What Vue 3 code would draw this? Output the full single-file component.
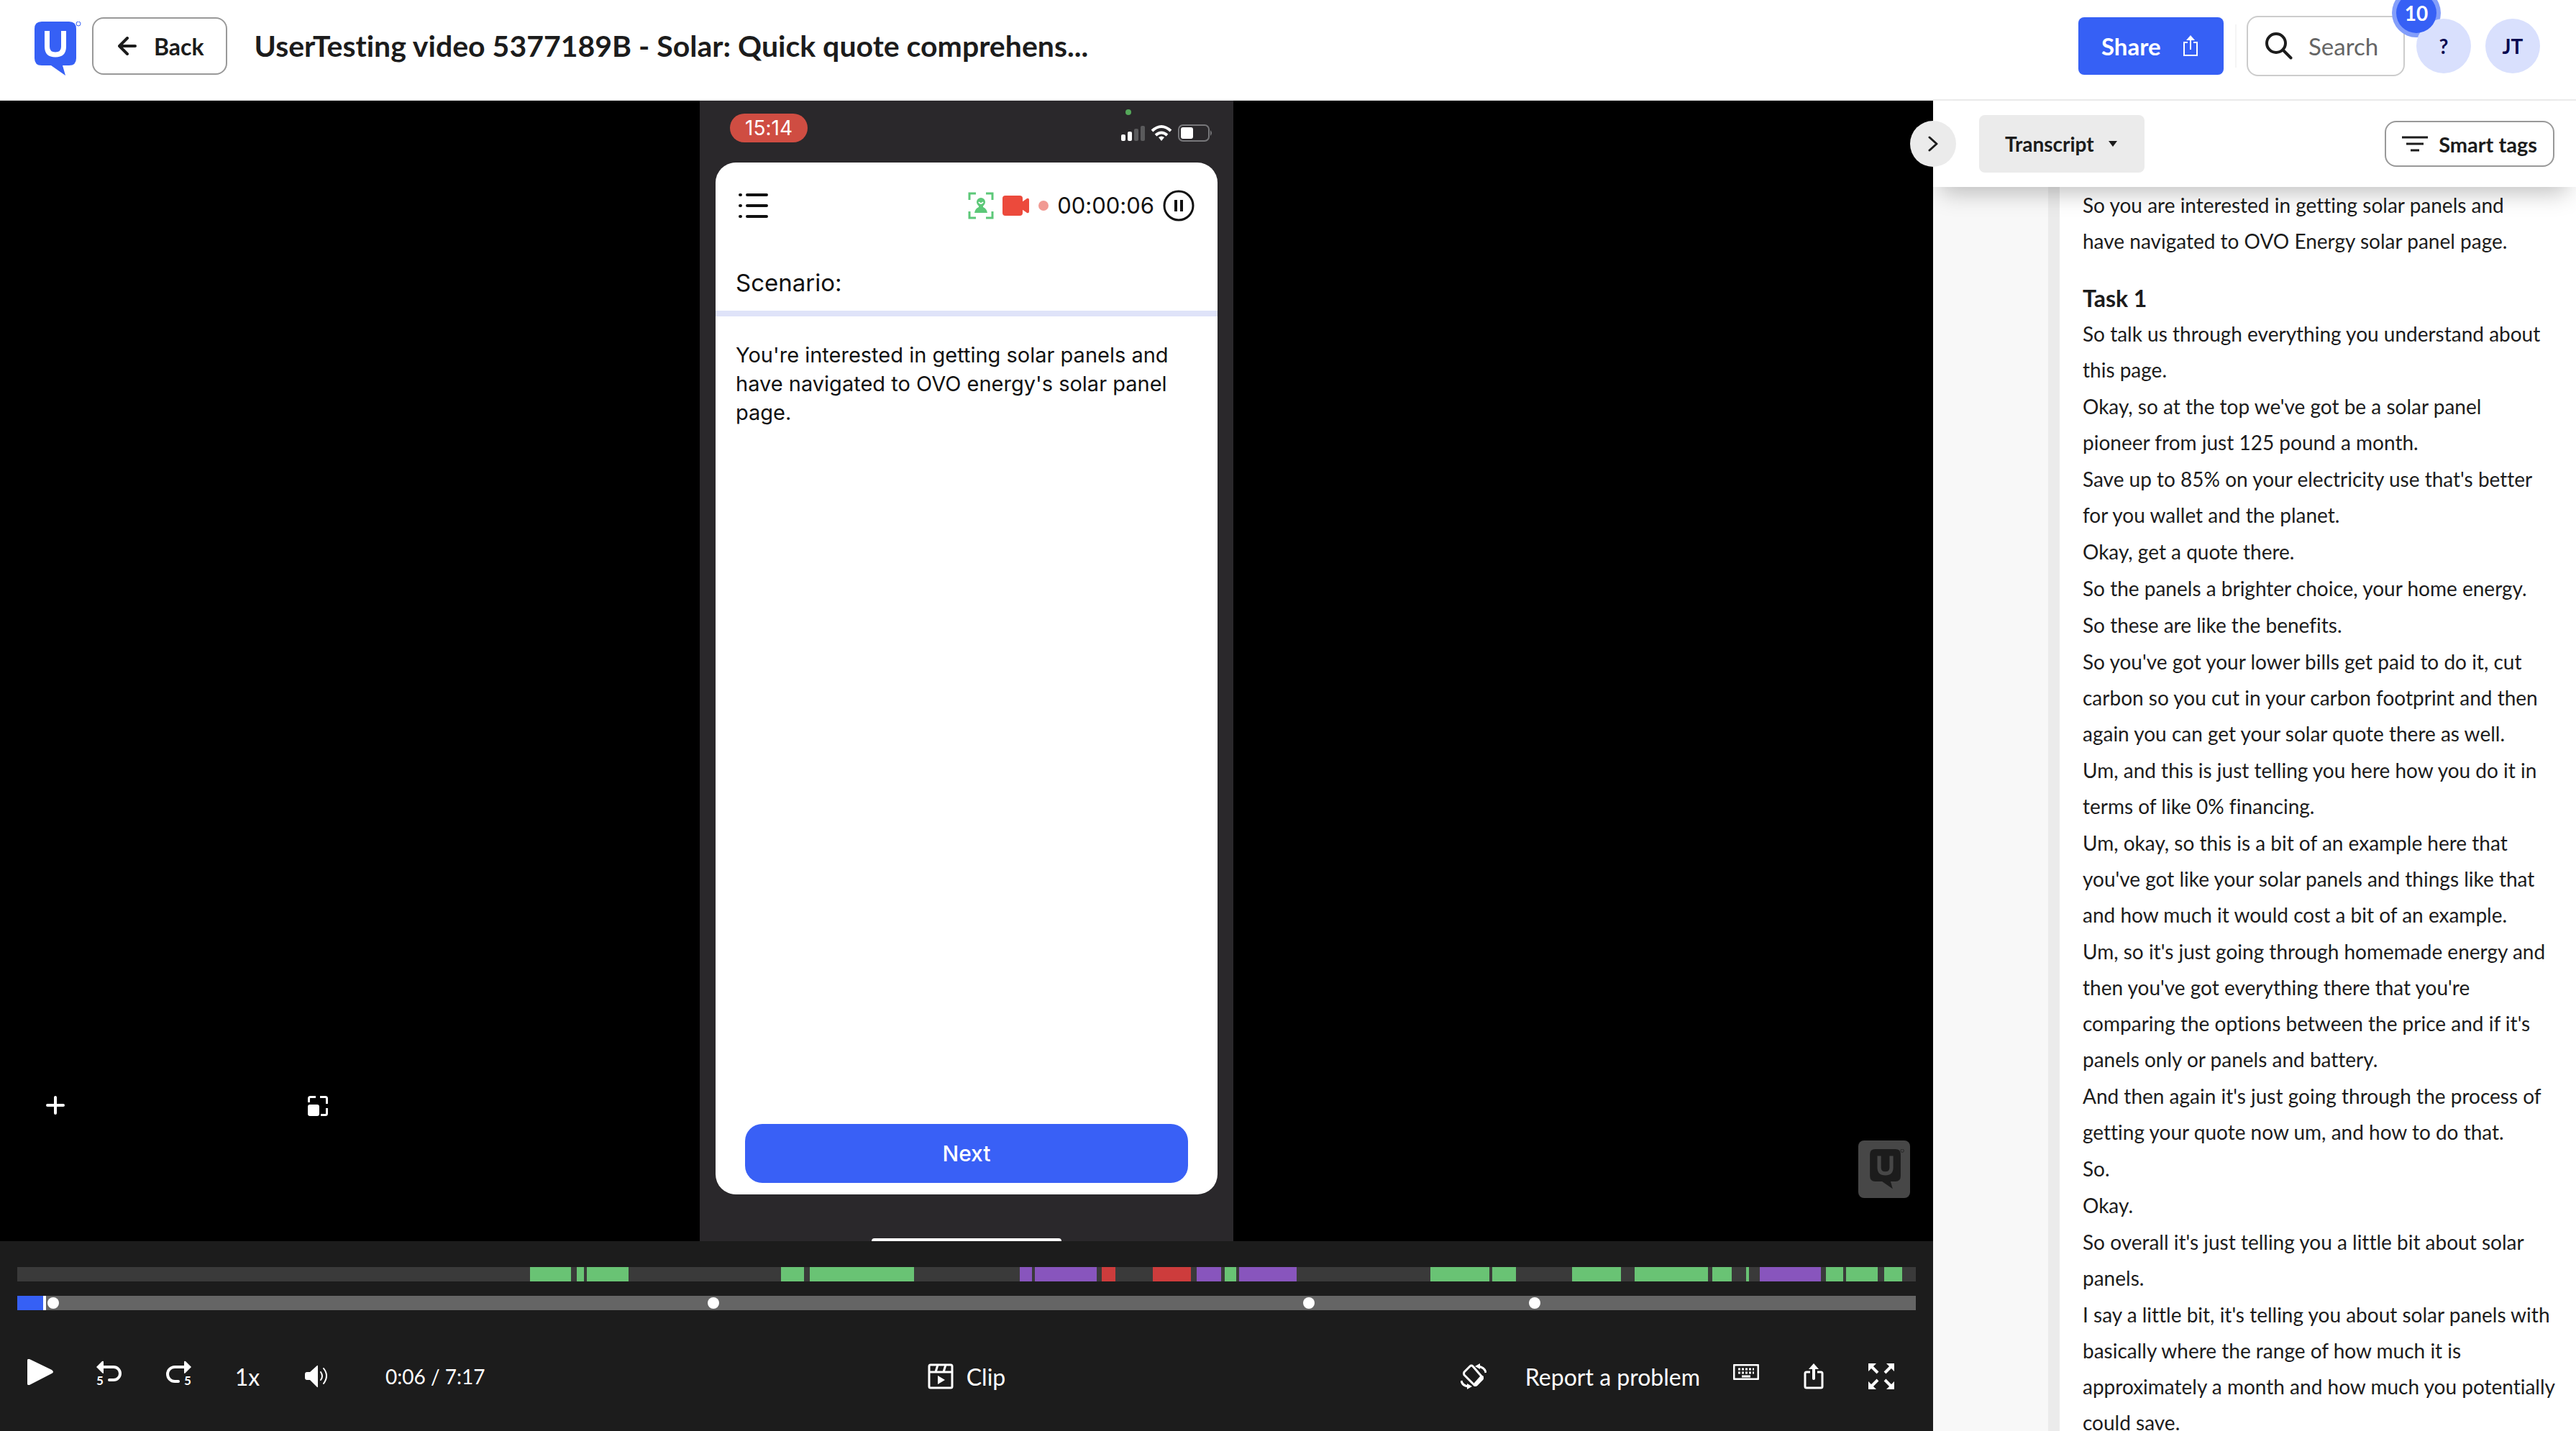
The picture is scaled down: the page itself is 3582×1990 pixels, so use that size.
<script setup>
import { ref, computed } from 'vue';

const duration = 437;
const current = ref(6);
const search = ref('');
const view = ref('Transcript');

const progressStyle = computed(() => {
  const pct = (current.value / duration) * 100;
  return { background: `linear-gradient(to right, #3660f5 ${pct}%, #656565 ${pct}%)` };
});

// sentiment ranges, in units of the 2640-wide timeline: [start, end, kind]
const ranges = [
  [713, 770, 'green'],
  [778, 788, 'green'],
  [792, 850, 'green'],
  [1062, 1094, 'green'],
  [1102, 1247, 'green'],
  [1394, 1411, 'purple'],
  [1415, 1501, 'purple'],
  [1508, 1527, 'red'],
  [1579, 1632, 'red'],
  [1640, 1674, 'purple'],
  [1679, 1695, 'green'],
  [1699, 1779, 'purple'],
  [1965, 2047, 'green'],
  [2051, 2084, 'green'],
  [2162, 2230, 'green'],
  [2249, 2351, 'green'],
  [2357, 2384, 'green'],
  [2404, 2408, 'green'],
  [2423, 2508, 'purple'],
  [2515, 2539, 'green'],
  [2543, 2587, 'green'],
  [2596, 2621, 'green']
];

const segments = ranges.map(([start, end, kind], i) => {
  const prev = i ? ranges[i - 1][1] : 0;
  return {
    kind,
    style: {
      marginLeft: ((start - prev) / 2640) * 100 + '%',
      width: ((end - start) / 2640) * 100 + '%'
    }
  };
});

const markers = [50, 968, 1796, 2110].map((x) => ({ left: (x / 2640) * 100 + '%' }));

const intro = ['So you are interested in getting solar panels and\nhave navigated to OVO Energy solar panel page.'];

const sentences = [
  'So talk us through everything you understand about\nthis page.',
  "Okay, so at the top we've got be a solar panel\npioneer from just 125 pound a month.",
  "Save up to 85% on your electricity use that's better\nfor you wallet and the planet.",
  'Okay, get a quote there.',
  'So the panels a brighter choice, your home energy.',
  'So these are like the benefits.',
  "So you've got your lower bills get paid to do it, cut\ncarbon so you cut in your carbon footprint and then\nagain you can get your solar quote there as well.",
  'Um, and this is just telling you here how you do it in\nterms of like 0% financing.',
  "Um, okay, so this is a bit of an example here that\nyou've got like your solar panels and things like that\nand how much it would cost a bit of an example.",
  "Um, so it's just going through homemade energy and\nthen you've got everything there that you're\ncomparing the options between the price and if it's\npanels only or panels and battery.",
  "And then again it's just going through the process of\ngetting your quote now um, and how to do that.",
  'So.',
  'Okay.',
  "So overall it's just telling you a little bit about solar\npanels.",
  "I say a little bit, it's telling you about solar panels with\nbasically where the range of how much it is\napproximately a month and how much you potentially\ncould save."
];
</script>

<template>
  <div class="page">
    <header class="header">
      <a href="#" class="logo" aria-label="UserTesting">
        <svg width="66" height="76" viewBox="0 0 66 76">
          <path fill="#3660f5" d="M10 0h38q10 0 10 10v41q0 10-10 10h-9l4 14-20-14H10Q0 61 0 51V10Q0 0 10 0z" />
          <path fill="none" stroke="#fff" stroke-width="7" d="M17.500 13v22q0 11 11.500 11t11.500-11V13" />
          <circle cx="61" cy="3" r="3" fill="none" stroke="#3660f5" />
        </svg>
      </a>
      <button class="back">
        <svg width="26" height="26" viewBox="0 0 26 26" fill="none" stroke="#1c1c1c" stroke-width="4" stroke-linecap="round" stroke-linejoin="round">
          <path d="M24 13H3M13 2 2 13l11 11" />
        </svg>
        Back
      </button>
      <h1 class="title">UserTesting video 5377189B - Solar: Quick quote comprehens...</h1>
      <button class="share">
        Share
        <svg width="22" height="30" viewBox="0 0 22 30" fill="none" stroke="#fff" stroke-width="2">
          <path d="M7 10H2v18h18V10h-5M11 20V4" />
          <path d="M11 0l6 7H5z" fill="#fff" stroke="none" />
        </svg>
      </button>
      <span class="divider"></span>
      <label class="search">
        <svg width="38" height="38" viewBox="0 0 38 38" fill="none" stroke="#1c1c1c" stroke-width="4" stroke-linecap="round">
          <circle cx="15" cy="15" r="13" />
          <path d="m24.500 24.500 11 11" />
        </svg>
        <input v-model="search" type="text" placeholder="Search" aria-label="Search" />
      </label>
      <div class="help">
        <span class="ring"></span>
        <button class="avatar">?</button>
        <span class="badge">10</span>
      </div>
      <button class="avatar">JT</button>
    </header>

    <div class="body">
      <main class="player">
        <div class="stage">
          <div class="phone">
            <div class="status">
              <span class="clock">15:14</span>
              <span class="live"></span>
              <svg width="128" height="26" viewBox="0 0 128 26">
                <g fill="#fff">
                  <rect x="0" y="15" width="6" height="9" rx="2" />
                  <rect x="9" y="11" width="6" height="13" rx="2" />
                </g>
                <g fill="#5a5a5c">
                  <rect x="18" y="7" width="6" height="17" rx="2" />
                  <rect x="27" y="3" width="6" height="21" rx="2" />
                </g>
                <g fill="none" stroke="#fff" stroke-width="4">
                  <path d="M43 10q13-12 26 0" />
                  <path d="M48 16q8-7 16 0" />
                </g>
                <path fill="#fff" d="M56 24l-4-5q4-3 8 0z" />
                <rect x="80" y="2" width="42" height="22" rx="6" fill="none" stroke="#77777a" stroke-width="2" />
                <rect x="83" y="5" width="17" height="16" rx="3" fill="#fff" />
                <path fill="#77777a" d="M124 9q4 4 0 8z" />
              </svg>
            </div>
            <div class="card">
              <div class="card-bar">
                <svg width="42" height="36" viewBox="0 0 42 36" stroke="#111" stroke-width="4" stroke-linecap="round">
                  <path d="M2 3h1M2 18h1M2 33h1M12 3h27M12 18h27M12 33h27" />
                </svg>
                <span class="spacer"></span>
                <svg width="36" height="38" viewBox="0 0 36 38">
                  <path fill="none" stroke="#5cc878" stroke-width="3" d="M2 11V2h9M25 2h9v9M34 27v9h-9M11 36H2v-9" />
                  <circle cx="18" cy="14" r="6" fill="#5cc878" />
                  <path fill="#5cc878" d="M15 17h6v4q5 2 6 8H9q1-6 6-8z" />
                  <path fill="none" stroke="#fff" stroke-width="2" d="M15 14q3 4 6 0" />
                </svg>
                <svg class="cam" width="38" height="28" viewBox="0 0 38 28" fill="#ec4a3c">
                  <rect width="28" height="28" rx="4" />
                  <path d="M27 9l7-5q3-1 3 2v16q0 3-3 2l-7-5z" />
                </svg>
                <span class="rec"></span>
                <span class="timer">00:00:06</span>
                <svg width="44" height="44" viewBox="0 0 44 44" fill="none" stroke="#111">
                  <circle cx="22" cy="22" r="20" stroke-width="3" />
                  <path stroke-width="4" d="M18 14v16M26 14v16" />
                </svg>
              </div>
              <h2 class="scenario">Scenario:</h2>
              <p class="task">You're interested in getting solar panels and<br />have navigated to OVO energy's solar panel<br />page.</p>
              <button class="next">Next</button>
            </div>
            <span class="home"></span>
          </div>

          <button class="overlay plus" aria-label="Zoom in">
            <svg width="28" height="28" viewBox="0 0 28 28" stroke="#fff" stroke-width="4" stroke-linecap="round">
              <path d="M14 3v22M3 14h22" />
            </svg>
          </button>
          <button class="overlay pip" aria-label="Resize">
            <svg width="28" height="28" viewBox="0 0 28 28">
              <path fill="none" stroke="#fff" stroke-width="3" d="M1.500 9V3.500q0-2 2-2H11M17 1.500h7.500q2 0 2 2V11M26.500 17v7.500q0 2-2 2H18" />
              <rect y="12" width="16" height="16" rx="3" fill="#fff" />
            </svg>
          </button>
          <div class="overlay watermark">
            <svg width="49" height="56" viewBox="0 0 66 76">
              <path fill="#1c1c1c" d="M10 0h38q10 0 10 10v41q0 10-10 10h-9l4 14-20-14H10Q0 61 0 51V10Q0 0 10 0z" />
              <path fill="none" stroke="#474747" stroke-width="7" d="M17.500 13v22q0 11 11.500 11t11.500-11V13" />
              <circle cx="61" cy="3" r="3" fill="none" stroke="#1c1c1c" />
            </svg>
          </div>
        </div>

        <div class="controls">
          <div class="sentiment">
            <span v-for="(seg, i) in segments" :key="i" :class="seg.kind" :style="seg.style"></span>
          </div>
          <div class="progress">
            <input v-model.number="current" type="range" min="0" :max="duration" aria-label="Seek" :style="progressStyle" />
            <span v-for="(marker, i) in markers" :key="i" class="marker" :style="marker"></span>
          </div>
          <div class="buttons">
            <div class="group left">
              <button class="raised" aria-label="Play">
                <svg width="36" height="36" viewBox="0 0 36 36" fill="#fff">
                  <path d="M0 2q0-3 3-2l31 15q4 3 0 5L3 36q-3 1-3-2z" />
                </svg>
              </button>
              <button class="raised" aria-label="Back 5 seconds">
                <svg class="skip" width="36" height="36" viewBox="0 0 36 36">
                  <path fill="#fff" d="M0 11 8 3q2-1 2 1v15q0 2-2 0z" />
                  <path fill="none" stroke="#fff" stroke-width="4" d="M9 11h15a9 9 0 0 1 9 9a9 9 0 0 1-9 9h-6" />
                  <circle cx="18" cy="29" r="2" fill="#fff" />
                  <text x="0" y="36" font-size="17" font-weight="700" fill="#fff">5</text>
                </svg>
              </button>
              <button class="raised" aria-label="Forward 5 seconds">
                <svg class="skip" width="36" height="36" viewBox="0 0 36 36">
                  <path fill="#fff" d="M36 11 28 3q-2-1-2 1v15q0 2 2 0z" />
                  <path fill="none" stroke="#fff" stroke-width="4" d="M27 11H13a10 10 0 0 0-10 10a10 10 0 0 0 10 10h5" />
                  <circle cx="18" cy="31" r="2" fill="#fff" />
                  <text x="26" y="36" font-size="17" font-weight="700" fill="#fff">5</text>
                </svg>
              </button>
              <button class="speed">1x</button>
              <button aria-label="Volume">
                <svg width="36" height="32" viewBox="0 0 36 32">
                  <path fill="#fff" d="M2 13q0-3 3-3h4l10-9q1-1 1 1v28q0 2-1 1L9 21H5q-3 0-3-3z" />
                  <path fill="none" stroke="#fff" stroke-width="2" stroke-linecap="round" d="M24 10q4 6 0 11M28 5q8 10 0 21" />
                </svg>
              </button>
              <span class="time">0:06 / 7:17</span>
            </div>
            <button class="clip">
              <svg width="36" height="36" viewBox="0 0 36 36" fill="none" stroke="#fff" stroke-width="3">
                <rect x="2" y="2" width="32" height="32" rx="2" />
                <path d="M2 12h32M14 2l-3 10M25 2l-3 10" />
                <path fill="#fff" stroke="none" d="M14 17l10 6-10 6z" />
              </svg>
              Clip
            </button>
            <div class="group right">
              <button aria-label="Rotate">
                <svg width="36" height="36" viewBox="0 0 36 36" fill="none" stroke="#fff" stroke-width="3" stroke-linejoin="round">
                  <path d="M13 4q2-2 4 0l13 15q1 2 0 3l-8 8q-2 1-3 0L5 16q-1-2 0-4z" />
                  <path fill="#fff" stroke="none" d="M27 18l4-1q2 2 0 5l-8 9q-3 2-5 0l1-4z" />
                  <path d="M25 4q9 2 10 9M11 32Q2 31 1 24" />
                  <path fill="#fff" stroke="none" d="M20 4l7-4v8zM16 32l-7 4v-8z" />
                </svg>
              </button>
              <button class="report">Report a problem</button>
              <button class="raised wide" aria-label="Keyboard shortcuts">
                <svg width="36" height="22" viewBox="0 0 36 22" fill="none" stroke="#fff">
                  <rect x="1" y="1" width="34" height="20" rx="2" stroke-width="3" />
                  <path stroke-width="3" stroke-dasharray="3 2" d="M7 7h22M7 12h22" />
                  <path stroke-width="3" d="M12 17h12" />
                </svg>
              </button>
              <button class="wide" aria-label="Share">
                <svg width="36" height="36" viewBox="0 0 36 36" fill="none" stroke="#fff" stroke-width="3">
                  <path d="M13 12H8q-2 0-2 2v18q0 2 2 2h20q2 0 2-2V14q0-2-2-2h-5" />
                  <path stroke-width="4" stroke-linecap="round" d="M18 21V6" />
                  <path fill="#fff" stroke="none" d="M18 0l7 8H11z" />
                </svg>
              </button>
              <button aria-label="Full screen">
                <svg width="36" height="36" viewBox="0 0 36 36" stroke="#fff" stroke-width="4">
                  <path d="M4 4l9 9M32 4l-9 9M4 32l9-9M32 32l-9-9" />
                  <path fill="#fff" stroke="none" d="M0 0h11L0 11zM36 0H25l11 11zM0 36h11L0 25zM36 36H25l11-11z" />
                </svg>
              </button>
            </div>
          </div>
        </div>
      </main>

      <aside class="panel">
        <button class="collapse" aria-label="Collapse panel">
          <svg width="14" height="22" viewBox="0 0 14 22" fill="none" stroke="#1c1c1c" stroke-width="3" stroke-linecap="round" stroke-linejoin="round">
            <path d="M2 2l10 9-10 9" />
          </svg>
        </button>
        <div class="toolbar">
          <label class="view">
            <select v-model="view" aria-label="Panel view">
              <option>Transcript</option>
            </select>
            <svg width="12" height="8" viewBox="0 0 12 8"><path fill="#1c1c1c" d="M0 0h12L6 8z" /></svg>
          </label>
          <button class="smart">
            <svg width="36" height="24" viewBox="0 0 36 24" stroke="#1c1c1c" stroke-width="3">
              <path d="M0 3h36M6 12h24M12 21h12" />
            </svg>
            Smart tags
          </button>
        </div>
        <div class="transcript">
          <div class="gutter"></div>
          <div class="lines">
            <p v-for="line in intro" :key="line">{{ line }}</p>
            <h3>Task 1</h3>
            <p v-for="line in sentences" :key="line">{{ line }}</p>
          </div>
        </div>
      </aside>
    </div>
  </div>
</template>

<style>
body {
  margin: 0;
  overflow: hidden;
}
</style>

<style scoped>
.page {
  display: flex;
  flex-direction: column;
  height: 100vh;
  font-family: Lato, "Open Sans", sans-serif;
  font-variant-ligatures: none;
  color: #1c1c1c;
  background: #fff;
}

button,
input,
select {
  font: inherit;
  font-variant-ligatures: none;
  color: inherit;
  background: none;
  border: none;
  padding: 0;
  margin: 0;
  outline: none;
}

svg {
  display: block;
  flex: none;
}

.header {
  display: flex;
  align-items: center;
  height: 128px;
  padding: 0 50px 10px 48px;
  border-bottom: 2px solid #ebebeb;
  box-sizing: content-box;
}

.logo {
  margin-right: 14px;
  padding-top: 8px;
}

.back {
  display: flex;
  align-items: center;
  gap: 24px;
  box-sizing: border-box;
  height: 80px;
  padding: 0 30px 0 34px;
  border: 2px solid #999;
  border-radius: 16px;
  font-size: 32px;
  font-weight: 700;
}

.title {
  flex: 1;
  margin: 0 0 0 38px;
  font-size: 41px;
  font-weight: 700;
  line-height: 48px;
  white-space: nowrap;
}

.share {
  display: flex;
  align-items: center;
  justify-content: space-between;
  box-sizing: border-box;
  width: 202px;
  height: 80px;
  padding: 0 35px 0 32px;
  border-radius: 8px;
  background: #3660f5;
  color: #fff;
  font-size: 33px;
  font-weight: 700;
}

.divider {
  width: 2px;
  height: 60px;
  margin: 0 14px 0 16px;
  background: #f5f5f5;
}

.search {
  display: flex;
  align-items: center;
  gap: 22px;
  box-sizing: border-box;
  width: 220px;
  height: 84px;
  padding: 0 20px 0 24px;
  margin-right: 16px;
  border: 2px solid #ccc;
  border-radius: 16px;
}

.search input {
  width: 100%;
  min-width: 0;
  font-size: 33px;
}

.search input::placeholder {
  color: #656565;
  opacity: 1;
}

.help {
  position: relative;
  margin-right: 20px;
}

.avatar {
  position: relative;
  display: block;
  width: 76px;
  height: 76px;
  border-radius: 50%;
  background: #d9e0fd;
  color: #0a0a50;
  font-size: 28px;
  font-weight: 700;
}

.ring,
.badge {
  position: absolute;
  border-radius: 50%;
}

.ring {
  left: -34px;
  top: -42px;
  width: 68px;
  height: 68px;
  background: #839efa;
}

.badge {
  left: -28px;
  top: -36px;
  width: 56px;
  height: 56px;
  background: #3660f5;
  color: #fff;
  font-size: 28px;
  font-weight: 700;
  line-height: 56px;
  text-align: center;
}

.body {
  flex: 1;
  display: flex;
  min-height: 0;
}

.player {
  flex: 1;
  min-width: 0;
  display: flex;
  flex-direction: column;
}

.stage {
  flex: 1;
  min-height: 0;
  position: relative;
  display: flex;
  justify-content: center;
  background: #000;
}

.phone {
  display: flex;
  flex-direction: column;
  box-sizing: border-box;
  width: 742px;
  padding: 18px 22px 0;
  background: #2a282b;
  font-family: Inter, "Liberation Sans", sans-serif;
  color: #111;
}

.status {
  position: relative;
  display: flex;
  justify-content: space-between;
  height: 68px;
  padding: 0 6px 0 20px;
}

.status svg {
  margin-top: 14px;
}

.clock {
  width: 108px;
  height: 40px;
  border-radius: 20px;
  background: #cf4d42;
  color: #fff;
  font-size: 28px;
  line-height: 40px;
  text-align: center;
}

.live {
  position: absolute;
  right: 120px;
  top: -6px;
  width: 8px;
  height: 8px;
  border-radius: 50%;
  background: #55a85a;
}

.card {
  flex: 1;
  display: flex;
  flex-direction: column;
  border-radius: 28px;
  background: #fff;
}

.card-bar {
  display: flex;
  align-items: center;
  height: 48px;
  margin-top: 36px;
  padding: 0 32px;
}

.spacer {
  flex: 1;
}

.cam {
  margin: 0 12px;
}

.rec {
  width: 14px;
  height: 14px;
  margin: 0 12px 0 0;
  border-radius: 50%;
  background: #f19a93;
}

.timer {
  margin: 0 12px 0 0;
  font-size: 31px;
  line-height: 40px;
}

.scenario {
  margin: 58px 0 0;
  padding: 0 28px 14px;
  border-bottom: 8px solid #dfe3f9;
  font-size: 33px;
  font-weight: 400;
  line-height: 50px;
}

.task {
  flex: 1;
  margin: 34px 28px 0;
  font-size: 29px;
  line-height: 40px;
  white-space: nowrap;
}

.next {
  height: 82px;
  margin: 0 41px 16px;
  border-radius: 24px;
  background: #3960f6;
  color: #fff;
  font-size: 30px;
  font-weight: 500;
}

.home {
  align-self: center;
  width: 264px;
  height: 4px;
  margin-top: 61px;
  border-radius: 4px 4px 0 0;
  background: #fff;
}

.overlay {
  position: absolute;
}

.plus {
  left: 63px;
  bottom: 175px;
}

.pip {
  left: 428px;
  bottom: 174px;
}

.watermark {
  right: 32px;
  bottom: 60px;
  display: flex;
  align-items: center;
  justify-content: center;
  box-sizing: border-box;
  width: 72px;
  height: 80px;
  padding-left: 8px;
  border-radius: 8px;
  background: #474747;
}

.controls {
  box-sizing: border-box;
  height: 264px;
  padding: 36px 24px 0;
  background: #1c1c1c;
  color: #fff;
}

.sentiment {
  display: flex;
  height: 20px;
  background: #3a3a3a;
}

.green {
  background: #69c374;
}

.purple {
  background: #8855bd;
}

.red {
  background: #cd3c3c;
}

.progress {
  position: relative;
  height: 20px;
  margin-top: 20px;
}

.progress input {
  display: block;
  width: 100%;
  height: 20px;
  appearance: none;
}

.progress input::-webkit-slider-thumb {
  appearance: none;
  width: 4px;
  height: 20px;
  background: #fff;
}

.marker {
  position: absolute;
  top: 2px;
  width: 16px;
  height: 16px;
  margin-left: -8px;
  border-radius: 50%;
  background: #fff;
}

.buttons {
  display: grid;
  grid-template-columns: 1fr auto 1fr;
  align-items: center;
  height: 64px;
  margin-top: 60px;
}

.group {
  display: flex;
  align-items: center;
}

.left {
  gap: 60px;
  padding-left: 14px;
}

.right {
  justify-content: flex-end;
  gap: 46px;
  padding-right: 30px;
}

.raised {
  padding-bottom: 12px;
}

.skip {
  overflow: visible;
}

.wide {
  margin-right: 12px;
}

.speed {
  width: 36px;
  font-size: 32px;
}

.time {
  margin-left: 18px;
  font-size: 28px;
}

.clip {
  display: flex;
  align-items: center;
  gap: 18px;
  font-size: 32px;
}

.report {
  margin-left: 8px;
  font-size: 32px;
}

.panel {
  position: relative;
  display: flex;
  flex-direction: column;
  width: 894px;
}

.collapse {
  position: absolute;
  z-index: 3;
  left: -32px;
  top: 28px;
  display: flex;
  align-items: center;
  justify-content: center;
  width: 64px;
  height: 64px;
  border-radius: 50%;
  background: #ebebeb;
}

.toolbar {
  position: relative;
  z-index: 2;
  display: flex;
  align-items: center;
  justify-content: space-between;
  box-sizing: border-box;
  height: 120px;
  padding: 0 30px 0 64px;
  background: #fff;
  box-shadow: 0 20px 30px -12px rgba(0, 0, 0, 0.25);
}

.view {
  display: flex;
  align-items: center;
  justify-content: space-between;
  box-sizing: border-box;
  width: 230px;
  height: 80px;
  padding: 0 38px 0 36px;
  border-radius: 8px;
  background: #ebebeb;
  font-size: 28px;
  font-weight: 700;
}

.view select {
  appearance: none;
}

.smart {
  display: flex;
  align-items: center;
  justify-content: space-between;
  box-sizing: border-box;
  width: 236px;
  height: 64px;
  padding: 0 22px;
  border: 2px solid #999;
  border-radius: 16px;
  font-size: 29px;
  font-weight: 700;
}

.transcript {
  flex: 1;
  display: flex;
  min-height: 0;
  overflow: hidden;
}

.gutter {
  width: 160px;
  background: #f8f8f8;
  border-right: 16px solid #ebebeb;
}

.lines {
  flex: 1;
  display: flex;
  flex-direction: column;
  gap: 1px;
  padding-left: 32px;
  font-size: 28px;
  line-height: 50px;
}

.lines p {
  margin: 0;
  white-space: pre;
}

.lines h3 {
  margin: 31px 0 0;
  font-size: 32px;
  font-weight: 700;
  line-height: 46px;
}
</style>
